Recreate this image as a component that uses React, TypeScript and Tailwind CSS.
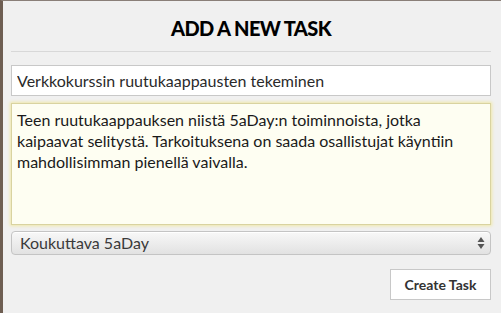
import { useState } from 'react';

export default function App() {
  const [title, setTitle] = useState('Verkkokurssin ruutukaappausten tekeminen');
  const [desc, setDesc] = useState(
    'Teen ruutukaappauksen niistä 5aDay:n toiminnoista, jotka kaipaavat selitystä. Tarkoituksena on saada osallistujat käyntiin mahdollisimman pienellä vaivalla.',
  );
  const [project, setProject] = useState('Koukuttava 5aDay');

  return (
    <div
      className="h-[313px] w-[501px] border-l-[3px] border-t border-l-[#6e5e52] border-t-[#8a7f78] bg-[#f0f0f0] pl-[8px] pr-[10px]"
      style={{ fontFamily: 'Lato, "Open Sans", sans-serif' }}
    >
      <h2 className="pt-[17px] pb-[13px] text-center text-[20px] font-black leading-[20px] tracking-[-0.6px] text-black">
        ADD A NEW TASK
      </h2>
      <div className="border-t border-[#d8d8d8]" />

      <input
        value={title}
        onChange={(e) => setTitle(e.target.value)}
        className="mt-[13px] block h-[31px] w-full border border-[#c8c8c8] bg-white px-[5px] text-[16px] text-[#2a2a2a] outline-none"
      />

      <textarea
        value={desc}
        onChange={(e) => setDesc(e.target.value)}
        className="mt-[7px] block h-[122px] w-full resize-none border border-[#d9d3a0] bg-[#fefef2] px-[5px] py-[5px] text-[16px] leading-[21px] text-[#1a1a1a] shadow-[0_0_3px_1px_#f0e8a8] outline-none"
      />

      <div className="relative mt-[6px]">
        <select
          value={project}
          onChange={(e) => setProject(e.target.value)}
          className="block h-[24px] w-full appearance-none rounded-[4px] border border-[#c4c4c4] bg-gradient-to-b from-[#f8f8f8] to-[#e2e2e2] pl-[8px] text-[16px] leading-[22px] text-[#3a3a3a] shadow-[inset_0_1px_0_#fff] outline-none"
        >
          <option>Koukuttava 5aDay</option>
        </select>
        <svg
          className="pointer-events-none absolute right-[6px] top-[5px]"
          width="8"
          height="14"
          viewBox="0 0 8 14"
        >
          <path d="M4 1 L7.5 6 L0.5 6 Z" fill="#555" />
          <path d="M4 13 L7.5 8 L0.5 8 Z" fill="#555" />
        </svg>
      </div>

      <div className="mt-[14px] flex justify-end">
        <button className="h-[31px] w-[101px] border border-[#c8c8c8] bg-white text-[14px] font-bold text-[#333]">
          Create Task
        </button>
      </div>
    </div>
  );
}
